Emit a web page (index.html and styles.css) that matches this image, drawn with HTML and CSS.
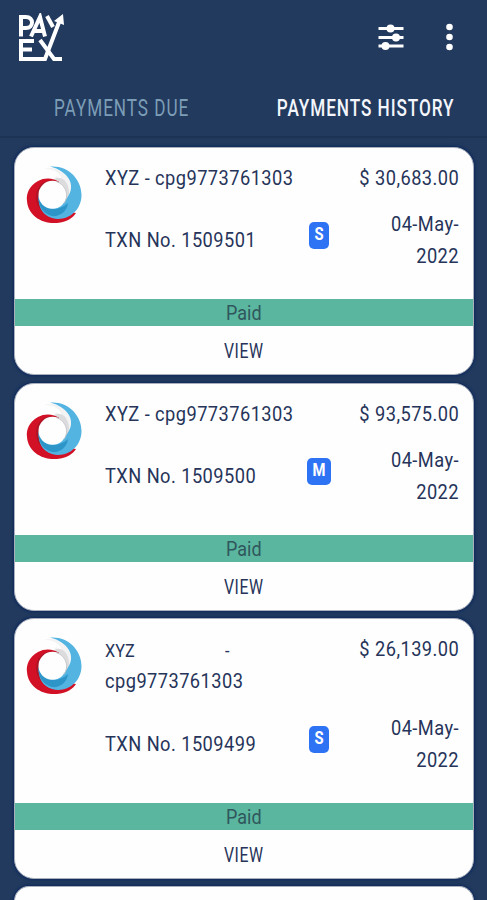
FILE: index.html
```html
<!DOCTYPE html>
<html lang="en">
<head>
<meta charset="utf-8">
<title>Payex payments</title>
<link rel="stylesheet" href="styles.css">
</head>
<body>
<svg class="defs" width="0" height="0" aria-hidden="true">
  <symbol id="swirl" viewBox="0 0 56 60">
    <path fill="#f3f3f4" d="M18 4C32 0 45 10 46 24C46 34 41 40 35 42L35 26L27 16L30 11C34 13 36 16 36 19C37 9 28 3 18 4Z"/>
    <path fill="#dcdcde" d="M27 15C36 8 44 19 43 29C42 36 39 41 34 43L35 28Z"/>
    <path fill="#d31126" d="M33 17C28 13 19 12 12 16C3 21 0 29 1 36C2 50 15 59 31 58C41 57 47 53 50 48L26 44L20 24Z"/>
    <path fill="#ad1426" d="M33 17C20 12 10 20 10 32C10 40 15 46 20 50L18 40L20 24Z"/>
    <path fill="#53b4e2" d="M24 1.500C42 0 55.500 14 55.500 30C55.500 47 40 57 26 53C17 50 12 43 12.500 31L30 42L41 33C51 20 42 6 24 1.500Z"/>
    <path fill="#2e95c9" d="M12.500 31C14 44 30 49 42 38C41 48 32 52 26 51C18 49 12 42 12.500 31Z"/>
    <circle cx="26.500" cy="29.800" r="14" fill="#fefefe"/>
    <path fill="none" stroke="#c7c7ca" stroke-width="1" d="M30 16.500C41 20 43 32 38 38"/>
  </symbol>
</svg>
<header class="appbar">
  <svg class="brand" viewBox="0 0 48 52" role="img" aria-label="PAYEX">
    <g fill="none" stroke="#fff" stroke-width="4">
      <path d="M3 23.500V4H8C16 4 16 15 8 15H3"/>
      <path d="M13 23.500L22 4L27 23.500M17 18H26"/>
      <path d="M29 3L35 14"/>
      <path d="M16 28H3V46H27L41.500 8"/>
      <path d="M3 36.500H14M22 27L36 46H44"/>
    </g>
    <path fill="#fff" d="M45 1L46 12L36 8Z"/>
  </svg>
  <div class="actions">
    <svg class="filter" viewBox="0 0 26 26">
      <path d="M0.500 4.500H25.500M0.500 13.500H25.500M0.500 22H25.500" stroke="#fff" stroke-width="3.200"/>
      <g fill="#fff"><circle cx="12.500" cy="4.500" r="4"/><circle cx="18" cy="13.500" r="4"/><circle cx="7.500" cy="22" r="4"/></g>
    </svg>
    <svg class="more" viewBox="0 0 8 28"><g fill="#fff"><circle cx="3.500" cy="4" r="3.300"/><circle cx="3.500" cy="14" r="3.300"/><circle cx="3.500" cy="24" r="3.300"/></g></svg>
  </div>
</header>
<nav class="tabs">
  <div class="tab"><span>PAYMENTS DUE</span></div>
  <div class="tab active"><span>PAYMENTS HISTORY</span></div>
</nav>
<main class="list">
  <article class="card">
    <div class="info">
      <svg class="logo"><use href="#swirl"/></svg>
      <div class="rows">
        <div class="row"><span class="t">XYZ - cpg9773761303</span><span class="t end">$ 30,683.00</span></div>
        <div class="row detail"><span class="t">TXN No. 1509501</span><b class="badge"><span>S</span></b><span class="t end date">04-May-<br>2022</span></div>
      </div>
    </div>
    <div class="status"><span>Paid</span></div>
    <div class="view"><span>VIEW</span></div>
  </article>
  <article class="card">
    <div class="info">
      <svg class="logo"><use href="#swirl"/></svg>
      <div class="rows">
        <div class="row"><span class="t">XYZ - cpg9773761303</span><span class="t end">$ 93,575.00</span></div>
        <div class="row detail"><span class="t">TXN No. 1509500</span><b class="badge wide"><span>M</span></b><span class="t end date">04-May-<br>2022</span></div>
      </div>
    </div>
    <div class="status"><span>Paid</span></div>
    <div class="view"><span>VIEW</span></div>
  </article>
  <article class="card tall">
    <div class="info">
      <svg class="logo"><use href="#swirl"/></svg>
      <div class="rows">
        <div class="row"><div class="name"><div class="split"><span>XYZ</span><span>-</span></div><span class="t">cpg9773761303</span></div><span class="t end">$ 26,139.00</span></div>
        <div class="row detail"><span class="t">TXN No. 1509499</span><b class="badge"><span>S</span></b><span class="t end date">04-May-<br>2022</span></div>
      </div>
    </div>
    <div class="status"><span>Paid</span></div>
    <div class="view"><span>VIEW</span></div>
  </article>
  <article class="card peek"></article>
</main>
</body>
</html>
```
FILE: styles.css
```css
* { box-sizing: border-box; }
html, body { height: 900px; overflow: hidden; }
body { margin: 0; background: #223a5e; font: 20.5px/30px Roboto, "Liberation Sans", sans-serif; color: #26345a; display: flex; flex-direction: column; }
.defs { position: absolute; }
.appbar { height: 78px; flex: none; display: flex; justify-content: space-between; padding: 13px 33px 0 18px; }
.brand { width: 48px; height: 52px; }
.actions { display: flex; gap: 42px; padding-top: 10px; }
.filter { width: 26px; height: 26px; margin-top: 1px; }
.more { width: 8px; height: 28px; }
.tabs { height: 60px; flex: none; display: grid; grid-template-columns: 1fr 1fr; border-bottom: 2px solid #1d3355; }
.tab { display: flex; justify-content: center; font-size: 23.5px; letter-spacing: 1.3px; color: #7c9db6; white-space: nowrap; padding-top: 15px; }
.tab span { transform: scaleX(.73); transform-origin: center top; height: 30px; }
.tab.active { color: #f3f6fc; font-weight: 500; }
.list { flex: none; padding: 9px 13px 0 14px; display: flex; flex-direction: column; gap: 7.5px; }
.card { height: 228px; flex: none; background: #fefefe; border: 1px solid #a9b0bc; border-radius: 20px; overflow: hidden; display: flex; flex-direction: column; box-shadow: 0 0 3px 1px #0c285c; }
.tall { height: 260.5px; }
.peek { height: 14.5px; border-bottom: 0; border-radius: 20px 20px 0 0; }
.info { flex: 1; display: flex; padding: 15px 14px 0 11px; }
.logo { width: 56px; height: 60px; flex: none; margin: 2px 23px 0 0; }
.rows { flex: 1; display: flex; flex-direction: column; gap: 15px; }
.row { display: flex; justify-content: space-between; }
.t { white-space: nowrap; letter-spacing: .5px; transform: scaleX(.89); transform-origin: left center; }
.end { transform-origin: right center; text-align: right; }
.detail { display: grid; grid-template-columns: 191px 46px 1fr; align-items: center; }
.date { line-height: 32px; }
.badge { justify-self: center; width: 20px; height: 27px; margin-bottom: 9px; border-radius: 5px; background: #2f73f5; color: #fff; font-size: 18.5px; line-height: 25px; text-align: center; }
.badge span { display: block; transform: scaleX(.8); }
.wide { width: 24px; }
.name { width: 125px; height: 62px; padding-top: 2px; }
.name .t { display: inline-block; }
.tall .detail { padding-top: 1px; margin-bottom: -1px; }
.split { display: flex; justify-content: space-between; font-size: 18px; height: 30px; }
.split span { transform: scaleX(.9); transform-origin: left center; }
.status { height: 27px; background: #5ab69e; color: #30575d; text-align: center; line-height: 28px; font-size: 20px; }
.status span, .view span { display: inline-block; transform: scaleX(.9); }
.view { height: 48px; line-height: 51px; text-align: center; }
.view span { transform: scaleX(.77); letter-spacing: .8px; }
```
